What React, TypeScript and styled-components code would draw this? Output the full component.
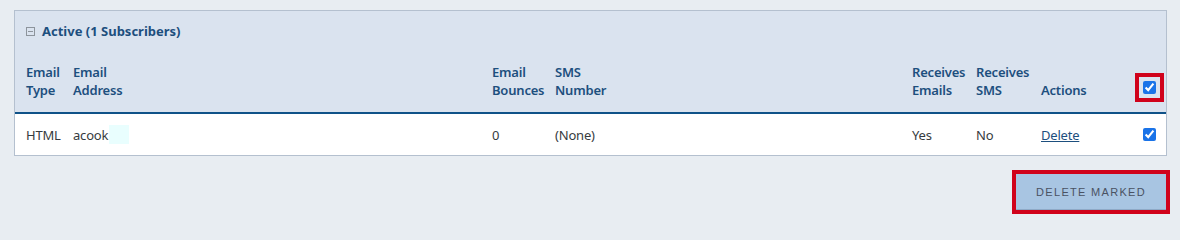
import React from "react";
import styled, { createGlobalStyle } from "styled-components";

const GlobalStyle = createGlobalStyle`
  html, body {
    margin: 0;
    padding: 0;
    background: #e8edf2;
  }
  body {
    font-family: "Noto Sans", "Liberation Sans", sans-serif;
    font-size: 13px;
    color: #363b40;
  }
`;

const Page = styled.div`
  padding: 10px 14px 0 14px;
  width: 1180px;
  box-sizing: border-box;
`;

const Panel = styled.section`
  width: 1153px;
  box-sizing: border-box;
  border: 1px solid #b4c0cf;
  background: #ffffff;
`;

const PanelHead = styled.div`
  background: #dae3ef;
  border-bottom: 2px solid #0f5288;
`;

const Title = styled.div`
  display: flex;
  align-items: center;
  gap: 7px;
  height: 40px;
  padding: 0 0 0 11px;
  font-weight: 700;
  color: #1d4f7e;
  font-size: 13px;
`;

const Toggle = styled.span`
  width: 7px;
  height: 7px;
  border: 1px solid #8d949c;
  position: relative;
  display: inline-block;
  &::after {
    content: "";
    position: absolute;
    left: 1px;
    right: 1px;
    top: 3px;
    height: 1px;
    background: #8d949c;
  }
`;

const Row = styled.div<{ $head?: boolean }>`
  display: grid;
  grid-template-columns: 47px 419px 63px 357px 64px 65px 102px 22px;
  align-items: ${(p) => (p.$head ? "end" : "center")};
  padding: ${(p) => (p.$head ? "12px 0 13px 11px" : "0 0 0 11px")};
  height: ${(p) => (p.$head ? "auto" : "41px")};
  line-height: 18px;
  font-weight: ${(p) => (p.$head ? 600 : 400)};
  color: ${(p) => (p.$head ? "#1d4f7e" : "#363b40")};
  letter-spacing: -0.2px;
`;

const Cell = styled.div`
  white-space: nowrap;
  display: flex;
  align-items: center;
`;

const HeadCell = styled.div`
  white-space: nowrap;
`;

const Hidden = styled.span`
  display: inline-block;
  width: 20px;
  height: 19px;
  background: #e9fefe;
  margin-left: 1px;
`;

const DeleteLink = styled.a`
  color: #1d4f7e;
  text-decoration: underline;
  cursor: pointer;
`;

const Box = styled.input.attrs({ type: "checkbox" })`
  width: 13px;
  height: 13px;
  margin: 0;
  accent-color: #1a73e8;
  display: block;
`;

const Marked = styled.span`
  display: inline-block;
  border: 4px solid #d0021b;
  padding: 4px;
  margin-left: -8px;
  margin-bottom: -7px;
`;

const Footer = styled.div`
  display: flex;
  justify-content: flex-end;
  width: 1156px;
  padding-top: 14px;
`;

const Outline = styled.div`
  border: 4px solid #d0021b;
`;

const Button = styled.button`
  display: block;
  width: 150px;
  height: 36px;
  border: none;
  border-bottom: 1px solid #8ea9c6;
  background: #a8c5e2;
  color: #4a5262;
  font-family: "Liberation Sans", Arial, sans-serif;
  font-size: 11px;
  letter-spacing: 1.3px;
  text-transform: uppercase;
  cursor: pointer;
`;

export default function App() {
  return (
    <Page>
      <GlobalStyle />
      <Panel>
        <PanelHead>
          <Title>
            <Toggle />
            Active (1 Subscribers)
          </Title>
          <Row $head>
            <HeadCell>Email<br />Type</HeadCell>
            <HeadCell>Email<br />Address</HeadCell>
            <HeadCell>Email<br />Bounces</HeadCell>
            <HeadCell>SMS<br />Number</HeadCell>
            <HeadCell>Receives<br />Emails</HeadCell>
            <HeadCell>Receives<br />SMS</HeadCell>
            <HeadCell>Actions</HeadCell>
            <HeadCell>
              <Marked>
                <Box defaultChecked />
              </Marked>
            </HeadCell>
          </Row>
        </PanelHead>
        <Row>
          <Cell>HTML</Cell>
          <Cell>acook<Hidden /></Cell>
          <Cell>0</Cell>
          <Cell>(None)</Cell>
          <Cell>Yes</Cell>
          <Cell>No</Cell>
          <Cell><DeleteLink>Delete</DeleteLink></Cell>
          <Cell><Box defaultChecked /></Cell>
        </Row>
      </Panel>
      <Footer>
        <Outline>
          <Button>Delete Marked</Button>
        </Outline>
      </Footer>
    </Page>
  );
}
